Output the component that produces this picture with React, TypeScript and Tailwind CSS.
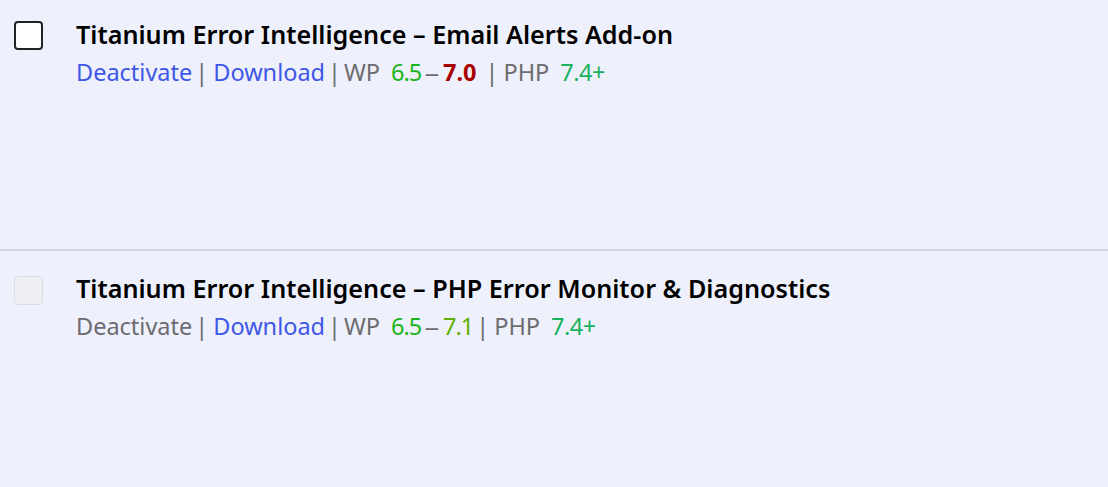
const plugins = [
  {
    name: 'Titanium Error Intelligence – Email Alerts Add-on',
    active: true,
    maxWp: '7.0',
    maxWpWarn: true,
  },
  {
    name: 'Titanium Error Intelligence – PHP Error Monitor & Diagnostics',
    active: false,
    maxWp: '7.1',
    maxWpWarn: false,
  },
];

const Sep = ({ wide }: { wide?: boolean }) => (
  <span className={wide ? 'ml-[9px] mr-[5px] text-[#6c6c70]' : 'ml-[3px] mr-[5px] text-[#6c6c70]'}>|</span>
);

const PluginRow = ({ plugin }: { plugin: (typeof plugins)[number] }) => (
  <div className="flex h-[249px] gap-[33px] pl-[14px] pt-[21px]">
    <div
      className={
        plugin.active
          ? 'h-[29px] w-[29px] shrink-0 rounded-[4px] border-2 border-[#222] bg-white'
          : 'mt-[4px] h-[29px] w-[29px] shrink-0 rounded-[4px] border border-[#dcdde3] bg-[#eeeff4]'
      }
    />
    <div className={plugin.active ? 'leading-[37px]' : 'mt-[4px] leading-[37px]'}>
      <div className={plugin.active ? '-mt-[5px] text-[25.2px] font-semibold text-black' : '-mt-[6px] text-[25.2px] font-semibold text-black'}>
        {plugin.name}
      </div>
      <div className="mt-[1px] text-[23.5px] text-[#6c6c70]">
        {plugin.active ? (
          <span className="text-[#3f57e6]">Deactivate</span>
        ) : (
          <span>Deactivate</span>
        )}
        <Sep />
        <span className="text-[#3f57e6]">Download</span>
        <Sep />
        <span className="-ml-[2px]">WP</span>
        <span className="ml-[11px] tracking-[-1px] text-[#1ab51a]">6.5</span>
        <span className="ml-[5px] mr-[5px] inline-block scale-x-125">–</span>
        {plugin.maxWpWarn ? (
          <span className="font-bold text-[#a80000]">{plugin.maxWp}</span>
        ) : (
          <span className="tracking-[-1px] text-[#5fb000]">{plugin.maxWp}</span>
        )}
        <Sep wide={plugin.maxWpWarn} />
        <span>PHP</span>
        <span className="ml-[11px] tracking-[-0.5px] text-[#17b35e]">7.4+</span>
      </div>
    </div>
  </div>
);

export default function App() {
  return (
    <div className="min-h-[487px] w-full bg-[#eef0fc]" style={{ fontFamily: '"Noto Sans", "Open Sans", sans-serif' }}>
      <PluginRow plugin={plugins[0]} />
      <div className="h-[2px] bg-[#d6d8e6]" />
      <PluginRow plugin={plugins[1]} />
    </div>
  );
}
